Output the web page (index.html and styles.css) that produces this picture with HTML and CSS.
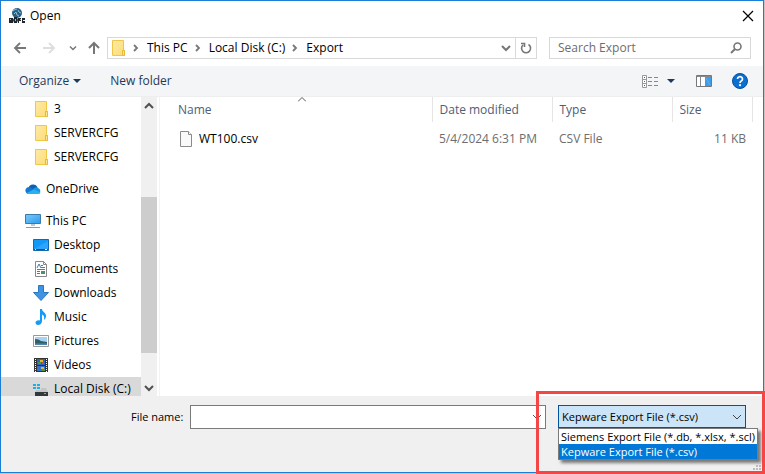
FILE: index.html
```html
<!DOCTYPE html>
<html lang="en">
<head>
  <meta charset="UTF-8" />
  <meta name="viewport" content="width=device-width, initial-scale=1.0"/>
  <title>Open</title>
  <link rel="stylesheet" href="styles.css">
</head>
<body>
  <!-- shared icons -->
  <svg class="defs" aria-hidden="true">
    <defs>
      <linearGradient id="blue" x1="0" y1="0" x2="1" y2="1">
        <stop offset="0" stop-color="#7cc8fa"/>
        <stop offset="1" stop-color="#2a9df0"/>
      </linearGradient>
      <linearGradient id="yellow" x1="0" y1="0" x2="1" y2="1">
        <stop offset="0" stop-color="#ffeaa4"/>
        <stop offset="1" stop-color="#fbdc78"/>
      </linearGradient>
      <symbol id="folder" viewBox="0 0 16 16">
        <path d="M2.5 .5h11v10h1v5h-12z" fill="url(#yellow)" stroke="#efc648"/>
        <path d="M12.5 15.5v-5h2v5z" fill="#ffe58e" stroke="#e8bb35"/>
      </symbol>
      <symbol id="chevron-right" viewBox="0 0 8 8">
        <path d="M2 1l3 3-3 3" fill="none" stroke="#777" stroke-width="1.8"/>
      </symbol>
      <symbol id="chevron-down" viewBox="0 0 10 8">
        <path d="M1 2l4 4 4-4" fill="none" stroke="currentColor" stroke-width="2"/>
      </symbol>
      <symbol id="caret" viewBox="0 0 8 4">
        <path d="M0 0h8L4 4z" fill="#1e395b"/>
      </symbol>
    </defs>
  </svg>

  <div class="window">
    <header class="titlebar">
      <svg class="icon" viewBox="0 0 16 16">
        <circle cx="8" cy="5" r="5" fill="#2b5f80"/>
        <path d="M4 3q2-2 4-2M5 6l2-2 1 3 2 1M9 2l1 2 2 1" fill="none" stroke="#8fc0d8"/>
        <path d="M0 10h4l1 2-1 3H0zM5 9h3l1 3-1 3H5zM9 10h3v3h-2v2H9zM13 10h3v2h-2v1h2v2h-3z" fill="#1d262c"/>
        <path d="M1.500 11v1M6.500 11v2M11 11.500h1" stroke="#a9b4ba" fill="none"/>
      </svg>
      <h1>Open</h1>
      <button class="close" aria-label="Close">
        <svg width="12" height="12" viewBox="0 0 12 12"><path d="M1 1l10 10M11 1L1 11" stroke="#000" stroke-width="1.200" fill="none"/></svg>
      </button>
    </header>

    <nav class="navbar">
      <div class="history">
        <button aria-label="Back">
          <svg width="14" height="12" viewBox="0 0 14 12"><path d="M13 6H2M7 1L2 6l5 5" fill="none" stroke="#777" stroke-width="1.8"/></svg>
        </button>
        <button aria-label="Forward">
          <svg width="14" height="12" viewBox="0 0 14 12"><path d="M1 6h11M7 1l5 5-5 5" fill="none" stroke="#ddd" stroke-width="1.8"/></svg>
        </button>
        <button class="recent" aria-label="Recent locations">
          <svg width="8" height="6"><use href="#chevron-down"/></svg>
        </button>
        <button aria-label="Up">
          <svg width="14" height="14" viewBox="0 0 14 14"><path d="M7 13V2M2 7l5-5 5 5" fill="none" stroke="#777" stroke-width="2"/></svg>
        </button>
      </div>
      <div class="address">
        <svg class="icon"><use href="#folder"/></svg>
        <svg class="sep"><use href="#chevron-right"/></svg>
        <a href="#">This PC</a>
        <svg class="sep"><use href="#chevron-right"/></svg>
        <a href="#">Local Disk (C:)</a>
        <svg class="sep"><use href="#chevron-right"/></svg>
        <a href="#">Export</a>
        <button class="previous" aria-label="Previous locations">
          <svg width="10" height="8"><use href="#chevron-down"/></svg>
        </button>
        <button class="refresh" aria-label="Refresh">
          <svg width="12" height="12" viewBox="0 0 12 12"><path d="M8.500 2.500A4.500 4.500 0 1 1 3 3M1 1.500h3.500V5" fill="none" stroke="#777" stroke-width="1.6"/></svg>
        </button>
      </div>
      <div class="search">
        <input type="search" placeholder="Search Export" aria-label="Search Export">
        <svg width="12" height="12" viewBox="0 0 12 12"><circle cx="7.500" cy="4.500" r="3.500" fill="none" stroke="#777" stroke-width="1.600"/><path d="M5 7L1 11" stroke="#777" stroke-width="2"/></svg>
      </div>
    </nav>

    <div class="toolbar">
      <button>Organize <svg class="caret"><use href="#caret"/></svg></button>
      <button>New folder</button>
      <div class="views">
        <button aria-label="Change your view">
          <svg class="icon" viewBox="0 0 16 16">
            <path d="M.5 2.500h4v12h-4zM.5 6.500h4M.5 10.500h4" fill="#fff" stroke="#999"/>
            <path d="M2 4h1v1H2z" fill="#555"/><path d="M2 8h1v1H2z" fill="#2a7fd0"/><path d="M2 12h1v1H2z" fill="#c22"/>
            <path d="M6 4.500h4M12 4.500h4M6 8.500h4M12 8.500h4M6 12.500h4M12 12.500h4" stroke="#888"/>
          </svg>
        </button>
        <button class="more" aria-label="More options"><svg class="caret"><use href="#caret"/></svg></button>
        <button class="pane" aria-label="Show the preview pane">
          <svg class="icon" viewBox="0 0 16 16">
            <path d="M.5 2.500h15v11H.5z" fill="#fff" stroke="#777"/>
            <path d="M1 3.500h14M4.500 4v9" stroke="#888"/>
            <path d="M9 4h6v9H9z" fill="#3f9ce8"/>
            <path d="M10 5l4 7" stroke="#5fb0f2"/>
          </svg>
        </button>
        <button aria-label="Get help">
          <svg class="icon" viewBox="0 0 16 16">
            <circle cx="8" cy="8" r="7.500" fill="#0a6fd0" stroke="#064f9c"/>
            <path d="M5.500 6a2.500 2.300 0 1 1 3.800 2Q8 8.800 8 10" fill="none" stroke="#fff" stroke-width="1.700"/>
            <circle cx="8" cy="12.200" r="1.100" fill="#fff"/>
          </svg>
        </button>
      </div>
    </div>

    <main class="content">
      <aside class="sidebar">
        <ul class="tree">
          <li class="child"><a href="#"><svg class="icon"><use href="#folder"/></svg>3</a></li>
          <li class="child"><a href="#"><svg class="icon"><use href="#folder"/></svg>SERVERCFG</a></li>
          <li class="child"><a href="#"><svg class="icon"><use href="#folder"/></svg>SERVERCFG</a></li>
          <li class="root"><a href="#">
            <svg class="icon" viewBox="0 0 16 16">
              <path d="M3.500 7a4.700 4.700 0 0 1 9-.5L9 11H3z" fill="#0f5fb5"/>
              <path d="M3.500 13A3.500 3.500 0 1 1 5 6.200L12 11z" fill="#1479d2"/>
              <path d="M8 8l2-1.500a4 4 0 0 1 3.500.8A3 3 0 0 1 13 13H4z" fill="#1b94e4"/>
              <path d="M1.500 12L9 8.500l6.500 3Q15 13 13 13H3.500q-1.500 0-2-1z" fill="#2bb0f0"/>
            </svg>OneDrive</a></li>
          <li class="root"><a href="#">
            <svg class="icon" viewBox="0 0 16 16">
              <path d="M.5 1.500h15v9H.5z" fill="url(#blue)" stroke="#3c7ba8"/>
              <path d="M6 11h4v2H6z" fill="#b9cbd8"/>
              <path d="M1 14.500h14" stroke="#8a9aa8"/>
            </svg>This PC</a></li>
          <li class="child"><a href="#">
            <svg class="icon" viewBox="0 0 16 16">
              <path d="M.5 2.500h15v11H.5z" fill="#1498f7" stroke="#1768a8"/>
              <path d="M1 12L15 4v8z" fill="#2ba5ff"/>
              <path d="M1 12.500h14" stroke="#124e80"/><path d="M2 12.500h1M12 12.500h2" stroke="#fff"/>
            </svg>Desktop</a></li>
          <li class="child"><a href="#">
            <svg class="icon" viewBox="0 0 16 16">
              <path d="M2.500 .5h8l3 3v12h-11z" fill="#fff" stroke="#888"/>
              <path d="M10.500 .5v3h3" fill="none" stroke="#888"/>
              <path d="M4 7l2-4 2 4M8 4.500h2M8 6.500h4M4 8.500h8M4 10.500h3M4 12.500h3" fill="none" stroke="#3f7fb5"/>
              <path d="M8 10h4v3H8z" fill="#4d8d78"/>
            </svg>Documents</a></li>
          <li class="child"><a href="#">
            <svg class="icon" viewBox="0 0 16 16">
              <path d="M5.500 .5h5v7h5L8 15.500.5 7.500h5z" fill="#3d94e4" stroke="#2b77bf"/>
            </svg>Downloads</a></li>
          <li class="child"><a href="#">
            <svg class="icon" viewBox="0 0 16 16">
              <path d="M7 0h2c0 3 4 3.500 4 7 0 2-1 3-2 4 .5-3 0-5-2-5.500V12c0 2.500-2 4-4 4-1.500 0-2.500-1-2.500-2.200C2.500 12 4.500 11 7 11.500z" fill="#149bf5"/>
            </svg>Music</a></li>
          <li class="child"><a href="#">
            <svg class="icon" viewBox="0 0 16 16">
              <path d="M.5 2.500h15v11H.5z" fill="#fff" stroke="#999"/>
              <path d="M2 4h12v8H2z" fill="#a9d2f2"/>
              <path d="M2 6q4 0 6 2l6 1v2H2z" fill="#2f6068"/>
              <path d="M2 10.500h12V12H2z" fill="#4e86ad"/>
            </svg>Pictures</a></li>
          <li class="child"><a href="#">
            <svg class="icon" viewBox="0 0 16 16">
              <path d="M1 1h14v14H1z" fill="#333"/>
              <path d="M4 2h8v6H4z" fill="#2c64c0"/><path d="M4 9h8v5H4z" fill="#3771cc"/>
              <path d="M7 3h3v2H7zM8 10h3v2H8z" fill="#e7b52c"/><path d="M5 5h3v2H5zM9 12h3v2H9z" fill="#4c9a3d"/>
              <path d="M9 5h2v2H9z" fill="#c9502c"/>
              <path d="M2.500 2v13M13.500 2v13" stroke="#fff" stroke-dasharray="1 1"/>
            </svg>Videos</a></li>
          <li class="child current"><a href="#">
            <svg class="icon" viewBox="0 0 16 16">
              <path d="M0 3h3v2H0zM4 3h3v2H4zM0 6h3v2H0zM4 6h3v2H4z" fill="#12b4ee"/>
              <path d="M8 7h5l2 4H2l1-2h5z" fill="#c4c6c8"/>
              <path d="M2 11h13v4H2z" fill="#34383b"/>
              <path d="M11 12h2v1h-2z" fill="#45e04a"/>
            </svg>Local Disk (C:)</a></li>
        </ul>
        <div class="scrollbar">
          <button aria-label="Scroll up"><svg class="flip" width="10" height="8"><use href="#chevron-down"/></svg></button>
          <div class="track"><div class="thumb"></div></div>
          <button aria-label="Scroll down"><svg width="10" height="8"><use href="#chevron-down"/></svg></button>
        </div>
      </aside>

      <section class="files">
        <table>
          <colgroup><col><col class="w-date"><col class="w-type"><col class="w-size"><col class="w-rest"></colgroup>
          <thead>
            <tr>
              <th class="name">Name
                <svg class="sort" width="8" height="5" viewBox="0 0 8 5"><path d="M0 4.500l4-4 4 4" fill="none" stroke="#555"/></svg>
              </th>
              <th>Date modified</th>
              <th>Type</th>
              <th>Size</th>
              <td></td>
            </tr>
          </thead>
          <tbody>
            <tr>
              <td class="name"><span class="file">
                <svg class="icon" viewBox="0 0 16 16"><path d="M2.500 .5h8l3 3v12h-11z" fill="#f8f9fa" stroke="#8a8a8a"/><path d="M10.500 .5v3h3" fill="#fff" stroke="#8a8a8a"/></svg>WT100.csv</span></td>
              <td>5/4/2024 6:31 PM</td>
              <td>CSV File</td>
              <td class="size">11 KB</td>
              <td></td>
            </tr>
          </tbody>
        </table>
      </section>
    </main>

    <footer class="footer">
      <label for="filename">File name:</label>
      <div class="filename">
        <input type="text" id="filename">
        <svg width="10" height="8" viewBox="0 0 10 8"><path d="M1 2l4 4 4-4" fill="none" stroke="#555"/></svg>
      </div>
      <div class="filetype">
        <select aria-label="File type">
          <option>Siemens Export File (*.db, *.xlsx, *.scl)</option>
          <option selected>Kepware Export File (*.csv)</option>
        </select>
        <svg width="10" height="8" viewBox="0 0 10 8"><path d="M1 2l4 4 4-4" fill="none" stroke="#444"/></svg>
        <ul class="options" role="listbox" aria-label="File types">
          <li role="option">Siemens Export File (*.db, *.xlsx, *.scl)</li>
          <li role="option" aria-selected="true" class="selected">Kepware Export File (*.csv)</li>
        </ul>
      </div>
      <svg class="grip" width="8" height="8" viewBox="0 0 8 8"><path d="M6 0h2v2H6zM3 3h2v2H3zM6 3h2v2H6zM0 6h2v2H0zM3 6h2v2H3zM6 6h2v2H6z" fill="#bbb"/></svg>
    </footer>
  </div>
  <div class="highlight"></div>
</body>
</html>
```
FILE: styles.css
```css
* {
  box-sizing: border-box;
}

body {
  margin: 0;
  padding: 0 1px 1px 0;
  height: 100vh;
  background: #c4c4c4;
  color: #000;
  font-family: "Open Sans", "Noto Sans", sans-serif;
  font-size: 12px;
  line-height: 16px;
}

button, input, select {
  margin: 0;
  padding: 0;
  border: none;
  background: none;
  color: inherit;
  font: inherit;
}

button {
  display: flex;
  align-items: center;
  justify-content: center;
}

a {
  color: inherit;
  text-decoration: none;
}

ul {
  list-style: none;
  margin: 0;
  padding: 0;
}

svg {
  display: block;
  flex: none;
}

.defs {
  position: absolute;
  width: 0;
  height: 0;
}

.icon {
  width: 16px;
  height: 16px;
}

.window {
  display: flex;
  flex-direction: column;
  height: 100%;
  border: 1px solid #1a7fd4;
  background: #fff;
}

.titlebar {
  display: flex;
  align-items: center;
  gap: 5px;
  height: 30px;
  padding: 0 9px 0 8px;
}

.titlebar h1 {
  flex: 1;
  margin: 0;
  font-size: 12px;
  font-weight: 400;
}

/* back / forward, address, search */
.navbar {
  display: flex;
  gap: 12px;
  padding: 6px 12px 7px 12px;
  color: #777;
}

.history {
  display: flex;
  align-items: center;
  gap: 15px;
  width: 82px;
}

.history .recent {
  margin: 0 -5px 0 -2px;
}

.address {
  display: flex;
  flex: 1;
  align-items: center;
  height: 22px;
  padding-left: 2px;
  border: 1px solid #d9d9d9;
}

.address a {
  color: #000;
}

.sep {
  width: 8px;
  height: 8px;
  margin: 0 7px 0 6px;
}

.previous {
  width: 18px;
  margin-left: auto;
}

.refresh {
  width: 21px;
  height: 20px;
  border-left: 1px solid #d9d9d9;
}

.search {
  display: flex;
  align-items: center;
  width: 202px;
  height: 22px;
  padding: 0 8px;
  border: 1px solid #d9d9d9;
}

.search input {
  flex: 1;
  min-width: 0;
  outline: none;
}

.search input::placeholder {
  color: #6d6d6d;
}

.toolbar {
  display: flex;
  align-items: center;
  gap: 29px;
  height: 31px;
  padding: 0 15px 0 18px;
  border-bottom: 1px solid #eee;
  background: #f4f5f7;
  color: #1e395b;
}

.toolbar button {
  gap: 4px;
}

.caret {
  width: 8px;
  height: 4px;
}

.views {
  display: flex;
  align-items: center;
  margin-left: auto;
}

.views .more {
  margin: 0 21px 0 9px;
}

.views .pane {
  margin-right: 20px;
}

.content {
  display: flex;
  flex: 1;
  min-height: 0;
}

.sidebar {
  display: flex;
  width: 159px;
  padding-right: 2px;
  border-right: 1px solid #f3f3f3;
  overflow: hidden;
}

.tree {
  flex: 1;
}

.tree a {
  display: flex;
  align-items: center;
  gap: 5px;
  height: 24px;
  padding-left: 24px;
}

.tree .child a {
  padding-left: 32px;
}

.tree .root {
  padding: 8px 0 0;
}

.tree .current {
  background: #d9d9d9;
}

.scrollbar {
  display: flex;
  flex-direction: column;
  width: 16px;
  background: #f0f0f0;
  color: #505050;
}

.scrollbar button {
  height: 17px;
}

.flip {
  transform: rotate(180deg);
}

.track {
  flex: 1;
  padding-top: 83px;
}

.thumb {
  height: 86%;
  max-height: 156px;
  background: #cdcdcd;
}

.files {
  flex: 1;
}

.files table {
  width: 100%;
  border-collapse: collapse;
  table-layout: fixed;
}

.w-date, .w-type {
  width: 120px;
}

.w-size {
  width: 80px;
}

.w-rest {
  width: 11px;
}

.files th {
  height: 25px;
  padding: 0 7px;
  border-right: 1px solid #e5e5e5;
  color: #4c607a;
  font-weight: 400;
  text-align: left;
}

.files td {
  height: 33px;
  padding: 0 7px;
  color: #6d6d6d;
  white-space: nowrap;
}

.files thead td {
  height: 25px;
}

.files .name {
  position: relative;
  padding-left: 18px;
  color: #000;
}

.files th.name {
  color: #4c607a;
}

.files .size {
  padding-right: 6px;
  text-align: right;
}

.sort {
  position: absolute;
  top: 0;
  left: 51%;
}

.file {
  display: flex;
  align-items: center;
  gap: 5px;
}

.footer {
  position: relative;
  display: flex;
  align-items: flex-start;
  height: 76px;
  padding: 9px 17px 0 130px;
  background: #f0f0f0;
  font-size: 11px;
}

.footer label {
  width: 59px;
  line-height: 24px;
}

.filename {
  display: flex;
  flex: 1;
  align-items: center;
  height: 24px;
  padding: 0 3px;
  border: 1px solid #7a7a7a;
  background: #fff;
}

.filename input {
  flex: 1;
  outline: none;
}

.filetype {
  position: relative;
  display: flex;
  align-items: center;
  width: 188px;
  height: 23px;
  margin-left: 12px;
}

.filetype select {
  width: 100%;
  height: 100%;
  padding-left: 3px;
  border: 1px solid #0054a0;
  border-radius: 0;
  background: #cce4f7;
  appearance: none;
}

.filetype svg {
  position: absolute;
  right: 4px;
}

.options {
  position: absolute;
  top: 100%;
  left: 0;
  width: 200px;
  border: 1px solid #7a7a7a;
  background: #fff;
  box-shadow: 3px 3px 3px rgba(0, 0, 0, 0.5);
  line-height: 15px;
  white-space: nowrap;
}

.options li {
  padding-left: 2px;
}

.options .selected {
  background: #0078d7;
  color: #fff;
}

.grip {
  position: absolute;
  right: 2px;
  bottom: 2px;
}

/* callout around the file type list */
.highlight {
  position: absolute;
  right: 0;
  bottom: 0;
  width: 229px;
  height: 83px;
  border: 3px solid #f54646;
}
```
